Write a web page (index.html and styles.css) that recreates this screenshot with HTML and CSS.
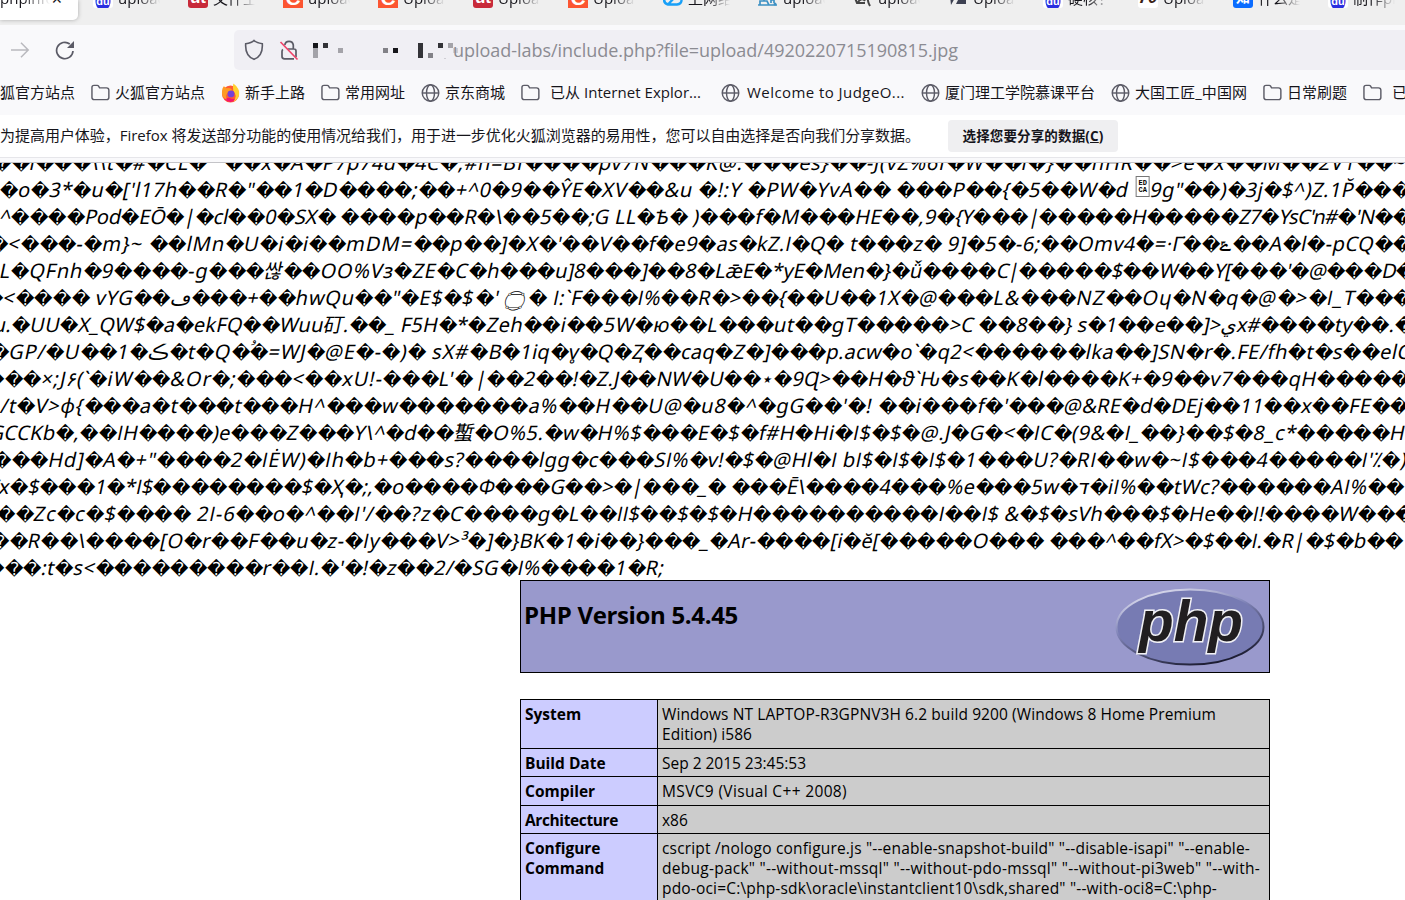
FILE: index.html
```html
<!DOCTYPE html>
<html lang="zh-CN">
<head>
<meta charset="utf-8">
<title>phpinfo()</title>
<link rel="stylesheet" href="styles.css">
</head>
<body>
<svg class="defs" width="0" height="0">
  <symbol id="folder" viewBox="0 0 20 20"><path d="M1 4.2Q1 2 3.2 2H6.6Q7.5 2 8 2.8L9 4.6H16.3Q18.8 4.6 18.8 7V14.8Q18.8 17 16.5 17H3.4Q1 17 1 14.8Z" fill="none" stroke="#5b5b66" stroke-width="1.5"/></symbol>
  <symbol id="globe" viewBox="0 0 20 20"><g fill="none" stroke="#5b5b66" stroke-width="1.5"><circle cx="10" cy="10" r="8.7"/><ellipse cx="10" cy="10" rx="4.2" ry="8.7"/><path d="M1.3 10H18.7"/></g></symbol>
</svg>
<div class="tabs">
  <div class="tab active"><span class="label">phpinfo</span><span class="close">✕</span></div>
  <div class="tab"><b class="fav baidu">du</b><span class="label">upload</span></div>
  <div class="tab"><b class="fav red">ut</b><span class="label">文件上</span></div>
  <div class="tab"><b class="fav orange">C</b><span class="label">upload</span></div>
  <div class="tab"><b class="fav orange">C</b><span class="label">Upload</span></div>
  <div class="tab"><b class="fav red">ut</b><span class="label">Upload</span></div>
  <div class="tab"><b class="fav orange">C</b><span class="label">Upload</span></div>
  <div class="tab"><svg class="fav" viewBox="0 0 20 20"><path d="M5 16.5H14Q19 16 18.5 11Q17 6 12 9L5 16.5Q0 15 1.5 10" fill="none" stroke="#18a0f8" stroke-width="2.4"/></svg><span class="label">上网络</span></div>
  <div class="tab"><svg class="fav" viewBox="0 0 20 20"><path d="M6 9V13M2 13H9L11 17H2ZM13 15V12H16V15M0 17H19" fill="none" stroke="#3d91c4" stroke-width="1.7"/><circle cx="17" cy="16" r="1.5" fill="#3d91c4"/></svg><span class="label">upload</span></div>
  <div class="tab"><svg class="fav" viewBox="0 0 20 20"><path d="M2 10L4 15H12M5 14Q9 9 12 13M15 8Q14 13 17 18" fill="none" stroke="#444" stroke-width="2"/></svg><span class="label">upload</span></div>
  <div class="tab"><svg class="fav" viewBox="0 0 20 20"><path d="M2 8H8L3 17ZM11 10L18 11V16H8Z" fill="#3d4152"/></svg><span class="label">Upload</span></div>
  <div class="tab"><b class="fav baidu">du</b><span class="label">硬核！</span></div>
  <div class="tab"><b class="fav seventy">70</b><span class="label">Upload</span></div>
  <div class="tab"><b class="fav zhi">知</b><span class="label">什么是</span></div>
  <div class="tab"><b class="fav baidu">du</b><span class="label">制作php</span></div>
</div>
<div class="nav">
  <svg class="fwd" width="20" height="20" viewBox="0 0 20 20"><path d="M1 10H18M11 2.7L18.2 10L11 17.3" fill="none" stroke="#b9b9be" stroke-width="1.5"/></svg>
  <svg class="reload" width="20" height="20" viewBox="0 0 20 20"><path d="M18 11A8.2 8.2 0 1 1 14.8 4" fill="none" stroke="#5b5b66" stroke-width="1.7"/><path d="M19 1V8H12Z" fill="#5b5b66"/></svg>
  <div class="url">
    <svg class="shield" width="20" height="22" viewBox="0 0 20 22"><path d="M10 1.5C12 3.5 15.5 4.3 18.3 4.7C18.8 12 16 18 10 20.3C4 18 1.2 12 1.7 4.7C4.5 4.3 8 3.5 10 1.5Z" fill="none" stroke="#5b5b66" stroke-width="1.6"/></svg>
    <svg class="lock" width="20" height="22" viewBox="0 0 20 22"><path d="M5.8 6A4.3 4.3 0 0 1 14.3 6V9.6M8.5 10H15Q17 10 17 12V18M4 10.5Q3 11 3 12.5V17.5Q3 19.8 5.5 19.8H15" fill="none" stroke="#5b5b66" stroke-width="1.7"/><path d="M1.5 3L18.5 20.5" stroke="#f0446a" stroke-width="1.7"/></svg>
    <svg class="mosaic" width="145" height="18" viewBox="0 0 145 18"><g fill="#a4a3a9"><path d="M0 5h5v10h-5zM25 5h5v5h-5zM135 0h5v5h-5z"/></g><path d="M0 0h5v5H0zM80 5h5v5h-5z" fill="#16161a"/><path d="M10 0h5v5h-5zM105 0h5v15h-5zM125 0h5v5h-5z" fill="#333338"/><path d="M70 5h5v5h-5zM115 10h5v5h-5z" fill="#828187"/><path d="M140 5h5v5h-5zM131 15h2v1h-2z" fill="#cfced4"/></svg>
    <span class="address fit" data-w="505">upload-labs/include.php?file=upload/4920220715190815.jpg</span>
  </div>
</div>
<div class="bookmarks">
  <a><span class="fit" data-w="75">狐官方站点</span></a>
  <a><svg><use href="#folder"/></svg><span class="fit" data-w="90">火狐官方站点</span></a>
  <a><svg viewBox="0 0 20 20"><circle cx="10" cy="11" r="9" fill="#ff5a36"/><path d="M3 16Q10 23 17 16Q13 17 8 15Z" fill="#f5156c"/><path d="M13 0Q20 5 19 12Q18 17 13 19Q18 13 13 8Q12 4 13 0Z" fill="#ffd02e"/><path d="M1 10Q1 5 3 3L6 5Q10 4 12 7L8 9Q4 12 6 17Q1 15 1 10Z" fill="#ff9a22"/><circle cx="10.5" cy="11" r="3.6" fill="#7542d8"/></svg><span class="fit" data-w="60">新手上路</span></a>
  <a><svg><use href="#folder"/></svg><span class="fit" data-w="60">常用网址</span></a>
  <a><svg><use href="#globe"/></svg><span class="fit" data-w="60">京东商城</span></a>
  <a class="wide"><svg><use href="#folder"/></svg><span class="fit" data-w="151">已从 Internet Explor...</span></a>
  <a class="mid"><svg><use href="#globe"/></svg><span class="fit" data-w="158">Welcome to JudgeO...</span></a>
  <a><svg><use href="#globe"/></svg><span class="fit" data-w="150">厦门理工学院慕课平台</span></a>
  <a><svg><use href="#globe"/></svg><span class="fit" data-w="112">大国工匠_中国网</span></a>
  <a><svg><use href="#folder"/></svg><span class="fit" data-w="60">日常刷题</span></a>
  <a class="wide"><svg><use href="#folder"/></svg><span>已从</span></a>
</div>
<div class="notice">
  <span class="fit" data-w="920">为提高用户体验，Firefox 将发送部分功能的使用情况给我们，用于进一步优化火狐浏览器的易用性，您可以自由选择是否向我们分享数据。</span>
  <button><span class="fit" data-w="141">选择您要分享的数据(<u>C</u>)</span></button>
</div>
<div class="edge"></div>
<main>
<div class="dump">
<p data-x="-7,459,947,1406"><span>��l���\\t�#�CL�&nbsp;&nbsp; ��x�A�P7p74u�4C�</span><span>,#n=Bf����pv7N���K@.���es}��-J(vZ%6f</span><span>�W��l�}��hHR��&gt;e�x��M��2V1��~</span></p>
<p data-x="0,480,953,1411"><span>�o�3*�u�['l17h��R�"��1�D����;��+^</span><span>0�9��ŶE�XV��&amp;u �!:Y �PW�YvA�� ���</span><span>P��{�5��W�d <b class="hex">ED<br>CA</b>9g"��)�3j�$^)Z.1P̆���</span></p>
<p data-x="0,477,937,1412"><span>^����Pod�EŌ�|�cl��0�SX� ����p��R</span><span>�\��5��;G LL�Ѣ� )���f�M���HE��,9</span><span>�{Y���|�����H�����Z7�YsC'n#�'N��</span></p>
<p data-x="-10,464,948,1413"><span>�&lt;���-�m}~ ��lMn�U�i�i��mDM=��p</span><span>��]�X�'��V��f�e9�as�kZ.I�Q� t���z� </span><span>9]�5�-6;��Omv4�=·Γ̇��ݻ��A�l�-pCQ��</span></p>
<p data-x="0,469,997,1415"><span>L�QFnh�9����-g���&#49918;��OO%Vз�ZE�C</span><span>�h���u]8���]��8�LǣE�*yE�Men�}�ǚ����</span><span>C|�����$��W��Y[���'�@���D�</span></p>
<p data-x="-15,476,938,1412"><span>�&lt;���� vYG��ڡ���+��hwQu��"�E$�$</span><span>�' <b class="ring">۝</b>� I:`F���I%��R�&gt;��{��U��1X�@</span><span>���L&amp;���NZ��Oɥ�N�q�@�&gt;�I_T���</span></p>
<p data-x="-6,487,950,1414"><span>u.�UU�X_QW$�a�ekFQ��Wuu矴.��_ F5H�*�</span><span>Zeh��i��5W�ю��L���ut��gT�����</span><span>&gt;C ��8��} s�1��e��]&gt;يx#����ty��.�</span></p>
<p data-x="-9,489,938,1411"><span>�GP/�U��1�ڪ�t�Q�<sup>و</sup>�=WJ�@E�-�)� sX#�</span><span>B�1iq�v̥�Q�Ⱬ��caq�Z�]���p.acw�o`�</span><span>q2&lt;������lka��]SN�r�.FE/fh�t�s��elC</span></p>
<p data-x="-14,476,941,1410"><span>���×;J۶(`�iW��&amp;Or�;���&lt;��xU!-���L'�</span><span>|��2��!�Z.J��NW�U��⋆�9Ɋ&gt;��H�ϑ`Ԋ</span><span>�s��K�l����K+�9��v7���qH�����</span></p>
<p data-x="1,529,978,1409"><span>/t�V&gt;φ{���a�t���t���H^���w�������</span><span>a%��H��U@�u8�^�gG��'�! ��i���</span><span>f�'���@&amp;RE�d�DEj��11��x��FE��</span></p>
<p data-x="-10,475,970,1412"><span>GCCKb�,��IH����)e���Z���Y\^�d��蟴</span><span>�O%5.�w�H%$���E�$�f#H�Hi�I$�$�@.J�</span><span>G�&lt;�IC�(9&amp;�I_��}��$�8_c*�����HI</span></p>
<p data-x="-7,465,947,1408"><span>���Hd]�A�+"����2�IĖW)�Ih�b+���s?</span><span>����lgg�c���SI%�v!�$�@Hl�I bI$�I$�I$</span><span>�1���U?�RI��w�~I$���4�����I'⁒�)</span></p>
<p data-x="-8,479,947,1405"><span>/x�$���1�*I$��������$�Ҳ�;,�o����</span><span>Ф���G��&gt;�|���_� ���Ē\����4���</span><span>%e���5w�ד�iI%��tWc?������AI%��</span></p>
<p data-x="-3,464,939,1414"><span>��Zc�c�$���� 2I-6��o�^��I'/��?z�C</span><span>����g�L��II$��$�$�H����������</span><span>I��I$ &amp;�$�sVh���$�He��I!����W���</span></p>
<p data-x="-9,487,973,1404"><span>��R��\����[O�r��F��u�z-�Iy���V&gt;³�</span><span>]�}BK�1�i��}���_�Ar-����[i�ĕ[�����</span><span>O��� ���^��fX&gt;�$��I.�R|�$�b��</span></p>
<p data-x="-14,473,665"><span>���:t�s&lt;���������r��I.�'�!�z��2/�</span><span>SG�I%����1�R;</span></p>
</div>
<div class="info">
  <header>
    <h1><span class="fit" data-w="214">PHP Version 5.4.45</span></h1>
    <svg width="150" height="80" viewBox="0 0 150 80">
      <defs><linearGradient id="rim" x1=".2" y1="0" x2=".7" y2="1"><stop offset="0" stop-color="#e4e4f2"/><stop offset=".4" stop-color="#8084b8"/><stop offset="1" stop-color="#17172b"/></linearGradient></defs>
      <ellipse cx="75" cy="40" rx="73.5" ry="37.5" fill="#777bb3" stroke="url(#rim)" stroke-width="2"/>
      <text class="logo" x="24" y="54" textLength="104" lengthAdjust="spacingAndGlyphs">php</text>
    </svg>
  </header>
  <table>
    <tr class="r1"><th>System</th><td><span class="fit" data-w="554">Windows NT LAPTOP-R3GPNV3H 6.2 build 9200 (Windows 8 Home Premium</span><br><span class="fit" data-w="90">Edition) i586</span></td></tr>
    <tr class="r2"><th>Build Date</th><td><span class="fit" data-w="144">Sep 2 2015 23:45:53</span></td></tr>
    <tr class="r3"><th>Compiler</th><td><span class="fit" data-w="185">MSVC9 (Visual C++ 2008)</span></td></tr>
    <tr class="r2"><th><span class="fit" data-w="93">Architecture</span></th><td>x86</td></tr>
    <tr class="r5"><th>Configure<br>Command</th><td><span class="fit" data-w="588">cscript /nologo configure.js "--enable-snapshot-build" "--disable-isapi" "--enable-</span><br><span class="fit" data-w="598">debug-pack" "--without-mssql" "--without-pdo-mssql" "--without-pi3web" "--with-</span><br><span class="fit" data-w="555">pdo-oci=C:\php-sdk\oracle\instantclient10\sdk,shared" "--with-oci8=C:\php-</span></td></tr>
  </table>
</div>
</main>
<script src="fit.js"></script>
</body>
</html>
```

FILE: styles.css
```css
* { box-sizing: border-box; }
body { margin: 0; width: 1405px; height: 900px; overflow: hidden; display: flex; flex-direction: column; background: #fff; color: #15141a; font: 15px "Open Sans", "Noto Sans CJK SC", "DejaVu Sans", sans-serif; }
.defs { position: absolute; }
.fit { display: inline-block; white-space: pre; }
.tabs { flex: none; display: flex; height: 25px; overflow: hidden; background: #efefef; }
.tab { flex: none; display: flex; gap: 5px; width: 95px; height: 20px; line-height: 20px; }
.tab .label { width: 42px; height: 24px; margin-top: -12px; overflow: hidden; white-space: nowrap; -webkit-mask-image: linear-gradient(90deg, #000 45%, transparent); mask-image: linear-gradient(90deg, #000 45%, transparent); }
.tab.active { width: 78px; margin-right: 15px; gap: 0; background: #fff; border-radius: 0 0 5px 0; box-shadow: 0 0 4px #aaa; }
.tab.active .label { width: 50px; }
.close { font-size: 14px; margin-top: -11px; margin-left: 1px; }
.fav { flex: none; width: 20px; height: 20px; margin-top: -12px; border-radius: 3px; font: bold 17px/19px "Liberation Sans", "Noto Sans CJK SC", sans-serif; text-align: center; color: #fff; overflow: hidden; }
.baidu { background: radial-gradient(ellipse at 50% 65%, #2a2fe0 0 7px, #fff 8px); font-size: 11px; line-height: 27px; }
.red { background: #c82a3a; }
.orange { background: #fc5531; border-radius: 0; font-size: 21px; }
.seventy { background: #fff; color: #3a2115; font-style: italic; }
.zhi { background: #0a6cff; font-size: 14px; }
.nav { flex: none; display: flex; align-items: center; height: 50px; padding-left: 10px; background: #f9f9fb; }
.reload { margin-left: 25px; }
.url { display: flex; align-items: center; width: 1171px; height: 40px; margin-left: 159px; padding-left: 10px; border-radius: 5px 0 0 5px; background: #f0eff4; }
.lock { margin-left: 15px; }
.mosaic { margin-left: 14px; margin-right: -5px; margin-top: 4px; }
.address { font-size: 18px; color: #8b8b92; }
.bookmarks { flex: none; display: flex; gap: 16px; align-items: center; height: 40px; padding-bottom: 5px; background: #f9f9fb; white-space: nowrap; overflow: hidden; }
.bookmarks a { flex: none; display: flex; gap: 5px; align-items: center; height: 22px; line-height: 22px; }
.bookmarks a span { margin-top: -2px; }
.bookmarks svg { flex: none; width: 19px; height: 20px; }
.bookmarks .wide { gap: 10px; margin-right: 4px; }
.bookmarks .mid { gap: 7px; }
.notice { flex: none; display: flex; align-items: center; height: 42px; gap: 28px; background: #fff; }
.notice > .fit { margin-top: -3px; }
.notice button { width: 170px; height: 32px; padding: 0 0 2px; border: 0; border-radius: 4px; background: #efeff1; color: #15141a; font: bold 13.5px "Open Sans", "Noto Sans CJK SC", sans-serif; }
.edge { flex: none; height: 6px; border-top: 1px solid #e6e6ea; border-bottom: 1px solid #c4c4c8; background: #f9f9fb; }
main { flex: 1; min-height: 0; overflow: hidden; color: #000; }
.dump { margin-top: -14px; height: 431px; }
.dump p { display: flex; margin: 0; height: 27px; font-family: "Noto Sans", "Noto Sans CJK SC", "DejaVu Sans", sans-serif; font-size: 20px; line-height: 27px; white-space: pre; unicode-bidi: bidi-override; direction: ltr; }
.dump span { flex: none; height: 27px; white-space: pre; transform: skewX(-12deg); }
.dump em { font-family: "Open Sans", sans-serif; font-style: normal; line-height: 1; }
.dump i { display: inline-block; width: 18.6px; height: 27px; vertical-align: top; padding-top: 1px; font: 18px/27px "DejaVu Sans", sans-serif; letter-spacing: 0; text-align: center; transform: skewX(12deg); }
.dump .hex { display: inline-block; width: 14px; height: 21px; margin-right: 2px; vertical-align: top; border: 1px solid #777; font: bold 7px/7px "Liberation Mono", monospace; letter-spacing: 0; text-align: center; padding-top: 3px; transform: skewX(12deg); }
.dump .ring { display: inline-block; width: 24px; height: 27px; vertical-align: top; font: 34px/19px "DejaVu Sans", sans-serif; letter-spacing: 0; }
.dump sup { display: inline-block; width: 0; height: 9px; vertical-align: top; font-size: 9px; line-height: 3px; }
.info { width: 750px; margin-left: 520px; }
.info header { display: flex; justify-content: space-between; height: 93px; padding: 6px 4px 6px 3px; border: 1px solid #000; background: #9999cc; }
.info h1 { margin: 8px 0 0; font-size: 24px; line-height: 40px; }
.logo { font: bold italic 57px "Liberation Sans", sans-serif; fill: #211e20; stroke: #f1f1f5; stroke-width: 3px; paint-order: stroke; }
table { width: 750px; margin-top: 26px; border-collapse: collapse; table-layout: fixed; font-size: 15.5px; line-height: 20px; }
th, td { padding: 4px 4px 0; border: 1px solid #000; vertical-align: top; text-align: left; white-space: nowrap; }
th { width: 137px; background: #ccccff; }
td { background: #cccccc; }
td .fit, th .fit { height: 20px; vertical-align: top; }
.r1 { height: 49px; }
.r2 { height: 28px; }
.r3 { height: 29px; }
.r5 { height: 90px; }
```

FILE: fit.js
```js
// Adjusts letter spacing so an element's text takes the given width.
function fit(el, width) {
  el.style.display = 'inline-block';
  const natural = el.getBoundingClientRect().width - (el.closest('.dump') ? 27 * Math.tan(Math.PI / 15) : 0);
  let count = 0;
  const walker = document.createTreeWalker(el, NodeFilter.SHOW_TEXT);
  while (walker.nextNode()) {
    const parent = walker.currentNode.parentElement;
    if (!parent.closest('i, .hex, .ring, sup')) count += [...walker.currentNode.data].length;
  }
  if (count) el.style.letterSpacing = (width - natural) / count + 'px';
  el.style.width = width + 'px';
}

document.querySelectorAll('.dump p').forEach(p => {
  const xs = p.dataset.x.split(',').map(Number);
  p.style.marginLeft = xs[0] + 'px';
  [...p.children].forEach((span, n) => {
    span.innerHTML = span.innerHTML.replace(/I/g, '<em>I</em>').replace(/\uFFFD/g, '<i>\uFFFD</i>');
    fit(span, xs[n + 1] - xs[n]);
  });
});
document.querySelectorAll('.fit').forEach(el => fit(el, Number(el.dataset.w)));
```
